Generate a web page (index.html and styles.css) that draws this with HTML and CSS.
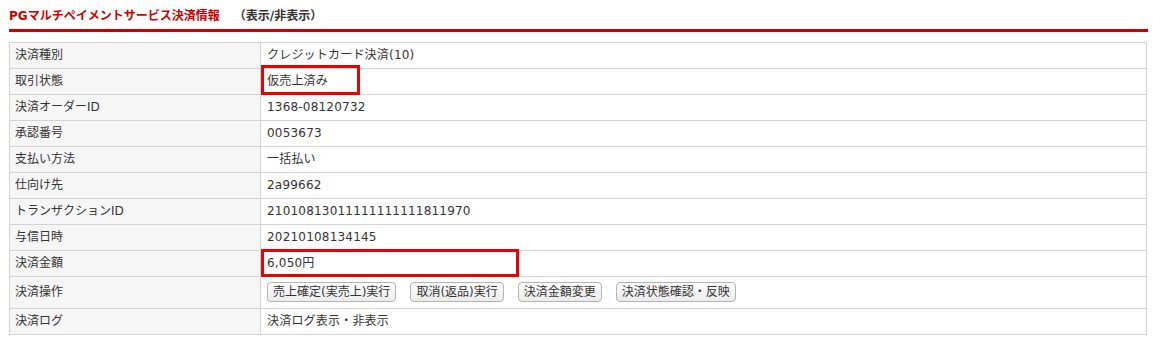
FILE: index.html
```html
<!DOCTYPE html>
<html lang="ja">
<head>
    <meta charset="UTF-8">
    <meta name="viewport" content="width=device-width, initial-scale=1.0">
    <link rel="stylesheet" href="styles.css">
</head>
<body>

<div class="payment">
    <h2 class="payment-title">
        <span class="title-main">PGマルチペイメントサービス決済情報</span>
        <a class="title-toggle">（表示/非表示）</a>
    </h2>

    <table class="info">
        <tr>
            <th>決済種別</th>
            <td>クレジットカード決済(10)</td>
        </tr>
        <tr>
            <th>取引状態</th>
            <td class="mark-cell">仮売上済み<span class="mark mark-status"></span></td>
        </tr>
        <tr>
            <th>決済オーダーID</th>
            <td>1368-08120732</td>
        </tr>
        <tr>
            <th>承認番号</th>
            <td>0053673</td>
        </tr>
        <tr>
            <th>支払い方法</th>
            <td>一括払い</td>
        </tr>
        <tr>
            <th>仕向け先</th>
            <td>2a99662</td>
        </tr>
        <tr>
            <th>トランザクションID</th>
            <td>21010813011111111111811970</td>
        </tr>
        <tr>
            <th>与信日時</th>
            <td>20210108134145</td>
        </tr>
        <tr>
            <th>決済金額</th>
            <td class="mark-cell">6,050円<span class="mark mark-amount"></span></td>
        </tr>
        <tr class="ops">
            <th>決済操作</th>
            <td>
                <div class="btns">
                    <button class="btn">売上確定(実売上)実行</button>
                    <button class="btn">取消(返品)実行</button>
                    <button class="btn">決済金額変更</button>
                    <button class="btn">決済状態確認・反映</button>
                </div>
            </td>
        </tr>
        <tr>
            <th>決済ログ</th>
            <td><a class="log-link">決済ログ表示・非表示</a></td>
        </tr>
    </table>
</div>

</body>
</html>
```

FILE: styles.css
```css
body {
    margin: 0;
    background: #fff;
    color: #333;
    font-family: "DejaVu Sans", "Noto Sans CJK JP", sans-serif;
    font-size: 12px;
}

.payment {
    width: 1139px;
    margin-left: 9px;
}

.payment-title {
    margin: 0;
    padding: 7px 0 4px;
    line-height: 18px;
    font-size: 12px;
    font-weight: bold;
    border-bottom: 3px solid #cc0000;
}

.title-main {
    color: #cc0000;
}

.title-toggle {
    color: #333;
    margin-left: 10px;
}

.info {
    margin-top: 10px;
    width: 1138px;
    border-collapse: collapse;
    border: 1px solid #cfcfcf;
}

.info th,
.info td {
    border: 1px solid #d4d4d4;
    height: 15px;
    line-height: 15px;
    padding: 5px 6px;
    text-align: left;
    font-weight: normal;
    vertical-align: middle;
}

.info th {
    width: 239px;
    padding-left: 5px;
    background: #f6f6f6;
}

.info td {
    background: #fff;
    letter-spacing: 0.2px;
}

/* 注目枠 */
.mark-cell {
    position: relative;
}

.mark {
    position: absolute;
    left: 0;
    border: 3px solid #ee0000;
    box-sizing: border-box;
}

.mark-status {
    top: -4px;
    width: 99px;
    height: 30px;
}

.mark-amount {
    top: -2px;
    width: 258px;
    height: 28px;
}

.ops th,
.ops td {
    height: 20px;
    padding-top: 5px;
    padding-bottom: 6px;
}

.btns {
    display: flex;
    gap: 14px;
}

.btn {
    height: 20px;
    padding: 0 5px;
    font-family: "DejaVu Sans", "Noto Sans CJK JP", sans-serif;
    font-size: 12px;
    letter-spacing: 0;
    color: #333;
    background: linear-gradient(#fdfdfd, #ececec);
    border: 1px solid #b4b4b4;
    border-radius: 4px;
    line-height: 18px;
}
```
